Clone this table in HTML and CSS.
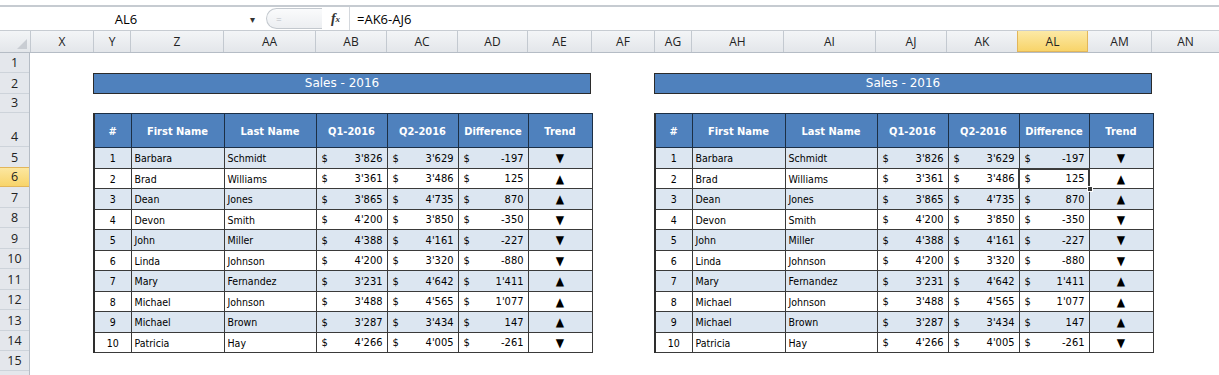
FILE: index.html
```html
<!DOCTYPE html>
<html>
<head>
<meta charset="utf-8">
<link rel="stylesheet" href="styles.css">
</head>
<body>
<div class="fbar">
  <div class="namebox"><span class="name">AL6</span><span class="dd">&#9662;</span></div>
  <div class="pill"><span class="pill-eq">=</span></div>
  <div class="fx">f<sub>x</sub></div>
  <div class="formula">=AK6-AJ6</div>
</div>
<div class="colhead">
  <div class="corner"><svg width="10" height="10" viewBox="0 0 10 10"><polygon points="10,0 10,10 0,10" fill="#c9cdd3"/></svg></div>
  <div class="ch">X</div><div class="ch">Y</div><div class="ch">Z</div><div class="ch">AA</div><div class="ch">AB</div><div class="ch">AC</div><div class="ch">AD</div><div class="ch">AE</div><div class="ch">AF</div><div class="ch">AG</div><div class="ch">AH</div><div class="ch">AI</div><div class="ch">AJ</div><div class="ch">AK</div><div class="ch sel">AL</div><div class="ch">AM</div><div class="ch last">AN</div>
</div>
<div class="sheet">
  <div class="rowheads">
    <div class="rh h20">1</div>
    <div class="rh h21">2</div>
    <div class="rh h19">3</div>
    <div class="rh h34">4</div>
    <div class="rh h21">5</div>
    <div class="rh h20 sel">6</div>
    <div class="rh h21">7</div>
    <div class="rh h20">8</div>
    <div class="rh h21">9</div>
    <div class="rh h20">10</div>
    <div class="rh h21">11</div>
    <div class="rh h20">12</div>
    <div class="rh h21">13</div>
    <div class="rh h20">14</div>
    <div class="rh h20">15</div>
    <div class="rh h20"></div>
  </div>
  <div class="canvas" id="canvas"></div>
</div>
<script src="app.js"></script>
</body>
</html>
```

FILE: app.js
```js
var data = [
  [1, "Barbara", "Schmidt", "3'826", "3'629", "-197", 0],
  [2, "Brad", "Williams", "3'361", "3'486", "125", 1],
  [3, "Dean", "Jones", "3'865", "4'735", "870", 1],
  [4, "Devon", "Smith", "4'200", "3'850", "-350", 0],
  [5, "John", "Miller", "4'388", "4'161", "-227", 0],
  [6, "Linda", "Johnson", "4'200", "3'320", "-880", 0],
  [7, "Mary", "Fernandez", "3'231", "4'642", "1'411", 1],
  [8, "Michael", "Johnson", "3'488", "4'565", "1'077", 1],
  [9, "Michael", "Brown", "3'287", "3'434", "147", 1],
  [10, "Patricia", "Hay", "4'266", "4'005", "-261", 0]
];
function money(v) {
  return '<span class="cur">$</span><span class="num">' + v + '</span>';
}
function block(selected) {
  var h = '<div class="block"><div class="title">Sales - 2016</div><div class="gap"></div>';
  h += '<table class="tbl"><colgroup><col class="c1"><col class="c2"><col class="c3"><col class="c4"><col class="c5"><col class="c6"><col class="c7"></colgroup>';
  h += '<thead><tr><th>#</th><th>First Name</th><th>Last Name</th><th>Q1-2016</th><th>Q2-2016</th><th>Difference</th><th>Trend</th></tr></thead><tbody>';
  data.forEach(function (r, i) {
    var cls = (i % 2 === 0) ? 'odd' : 'even';
    var selCls = (selected && i === 1) ? ' selcell' : '';
    h += '<tr class="' + cls + '"><td class="n">' + r[0] + '</td><td>' + r[1] + '</td><td>' + r[2] + '</td>' +
      '<td class="m">' + money(r[3]) + '</td><td class="m">' + money(r[4]) + '</td>' +
      '<td class="m' + selCls + '">' + money(r[5]) + (selCls ? '<span class="handle"></span>' : '') + '</td>' +
      '<td class="t">' + (r[6] ? '&#9650;' : '&#9660;') + '</td></tr>';
  });
  h += '</tbody></table></div>';
  return h;
}
document.getElementById('canvas').innerHTML = block(false) + block(true);
```

FILE: styles.css
```css
* { box-sizing: border-box; }
body {
  margin: 0;
  background: #fff;
  font-family: "DejaVu Sans", "Liberation Sans", sans-serif;
  overflow: hidden;
  width: 1219px;
  height: 375px;
}
.fbar {
  border-top: 2px solid #c6cbd1;
  margin-top: 5px;
  height: 25px;
  display: flex;
  align-items: center;
  font-family: "Open Sans", "Liberation Sans", sans-serif;
  font-size: 13px;
  color: #000;
}
.namebox {
  width: 266px;
  display: flex;
  align-items: center;
  height: 100%;
}
.name { width: 252px; text-align: center; }
.dd { font-size: 10px; color: #333; margin-left: -2px; }
.pill {
  width: 56px;
  height: 21px;
  border: 1px solid #c3c8ce;
  border-right: none;
  border-radius: 11px 0 0 11px;
  background: linear-gradient(#fafbfc, #eceef1);
  display: flex;
  align-items: center;
  padding-left: 9px;
  color: #b8bdc4;
  font-size: 10px;
}
.fx {
  width: 28px;
  font-family: "Liberation Serif", serif;
  font-style: italic;
  font-weight: bold;
  font-size: 14px;
  color: #333;
  height: 100%;
  display: flex;
  align-items: center;
  justify-content: center;
  border-right: 1px solid #d4d8dd;
}
.fx sub { font-size: 9px; vertical-align: -2px; }
.formula { padding-left: 7px; font-size: 13px; }

.colhead {
  display: grid;
  grid-template-columns: 31px 63px 37px 93px 92px 71px 71px 70px 64px 63px 37px 92px 92px 71px 71px 70px 64px 67px;
  height: 23px;
  background: linear-gradient(#f3f5f7, #e3e6ea);
  border-top: 1px solid #c7ccd2;
  border-bottom: 1px solid #b5bcc5;
  font-family: "Open Sans", "Liberation Sans", sans-serif;
  font-size: 12px;
  color: #222;
}
.corner {
  display: flex;
  align-items: flex-end;
  justify-content: flex-end;
  padding: 0 3px 3px 0;
  border-right: 1px solid #c3c9d0;
}
.ch {
  display: flex;
  align-items: center;
  justify-content: center;
  border-right: 1px solid #c3c9d0;
}
.ch.last { border-right: none; }
.ch.sel {
  background: linear-gradient(#fce9a6, #f8d46a);
  border-right: 1px solid #e2b65a;
  border-left: 1px solid #e2b65a;
  margin-left: -1px;
  border-bottom: 1px solid #e2b65a;
}

.sheet { display: flex; }
.rowheads {
  width: 30px;
  flex: none;
  background: #e4e7ec;
  border-right: 1px solid #b5bcc5;
  font-family: "Open Sans", "Liberation Sans", sans-serif;
  font-size: 12.5px;
  color: #222;
}
.rh {
  display: flex;
  align-items: flex-end;
  justify-content: center;
  border-bottom: 1px solid #cdd3da;
  padding-bottom: 1px;
}
.rh.sel { background: linear-gradient(#fce7a0, #f8d46a); border-bottom-color: #e2b65a; border-top: 1px solid #e2b65a; margin-top: -1px; }
.h19 { height: 19px; }
.h20 { height: 20px; }
.h21 { height: 21px; }
.h34 { height: 34px; }

.canvas {
  display: flex;
  gap: 63px;
  padding-left: 63px;
  padding-top: 20px;
}
.block { width: 498px; }
.title {
  height: 21px;
  width: 498px;
  background: #4f81bd;
  border: 1px solid #2b2b2b;
  color: #fff;
  text-align: center;
  font-size: 12px;
  line-height: 19px;
}
.gap { height: 19px; }
.tbl {
  border-collapse: collapse;
  table-layout: fixed;
  width: 498px;
  font-size: 10.5px;
  font-stretch: condensed;
  font-family: "DejaVu Sans Condensed", "DejaVu Sans", "Liberation Sans", sans-serif;
  color: #000;
  border-left: 2px solid #2e2e2e;
}
.c1 { width: 37px; }
.c2 { width: 93px; }
.c3 { width: 92px; }
.c4 { width: 71px; }
.c5 { width: 71px; }
.c6 { width: 70px; }
.c7 { width: 64px; }
.tbl th {
  height: 34px;
  background: #4f81bd;
  color: #fff;
  font-weight: bold;
  font-size: 11px;
  border: 1px solid #1c2f45;
  text-align: center;
  vertical-align: middle;
  padding: 1px 0 0 0;
}
.tbl td {
  border: 1px solid #3a3a3a;
  padding: 0 3px;
  height: 21px;
  white-space: nowrap;
  vertical-align: middle;
}
.tbl tr.even td { height: 20px; }
.tbl tr.odd td { background: #dce6f1; }
.tbl tr.even td { background: #fff; }
.tbl td.n { text-align: center; }
.tbl td.m { position: relative; }
.cur { float: left; padding-left: 2px; font-size: 11px; }
.num { float: right; padding-right: 1px; font-size: 11px; }
.tbl td.t { text-align: center; font-size: 12px; font-family: "DejaVu Sans", sans-serif; }
.tbl td.selcell {
  outline: 2px solid #3c3c3c;
  outline-offset: -1px;
}
.handle {
  position: absolute;
  right: -4px;
  bottom: -4px;
  width: 6px;
  height: 6px;
  background: #3c3c3c;
  border: 1px solid #fff;
  z-index: 2;
}
```
